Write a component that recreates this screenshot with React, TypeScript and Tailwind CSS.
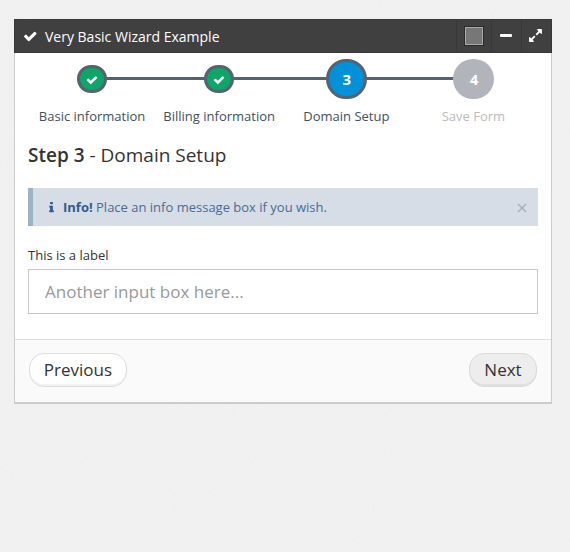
import React from "react";

const CHECK =
  "M1671 566q0 40-28 68l-724 724-136 136q-28 28-68 28t-68-28l-136-136-362-362q-28-28-28-68t28-68l136-136q28-28 68-28t68 28l294 295 656-657q28-28 68-28t68 28l136 136q28 28 28 68z";
const INFO =
  "M1216 1344v128q0 26-19 45t-45 19h-512q-26 0-45-19t-19-45v-128q0-26 19-45t45-19h64v-384h-64q-26 0-45-19t-19-45v-128q0-26 19-45t45-19h384q26 0 45 19t19 45v576h64q26 0 45 19t19 45zm-128-1152v192q0 26-19 45t-45 19h-256q-26 0-45-19t-19-45v-192q0-26 19-45t45-19h256q26 0 45 19t19 45z";
const EXPAND =
  "M883 1056q0 13-10 23l-332 332 144 144q19 19 19 45t-19 45-45 19h-448q-26 0-45-19t-19-45v-448q0-26 19-45t45-19 45 19l144 144 332-332q10-10 23-10t23 10l114 114q10 10 10 23zm781-864v448q0 26-19 45t-45 19-45-19l-144-144-332 332q-10 10-23 10t-23-10l-114-114q-10-10-10-23t10-23l332-332-144-144q-19-19-19-45t19-45 45-19h448q26 0 45 19t19 45z";

function Icon({ path, className }: { path: string; className: string }) {
  return (
    <svg viewBox="0 0 1792 1792" fill="currentColor" className={className} aria-hidden="true">
      <path d={path} />
    </svg>
  );
}

type StepState = "complete" | "active" | "pending";

const steps: { n: number; title: string; state: StepState }[] = [
  { n: 1, title: "Basic information", state: "complete" },
  { n: 2, title: "Billing information", state: "complete" },
  { n: 3, title: "Domain Setup", state: "active" },
  { n: 4, title: "Save Form", state: "pending" },
];

function Bullet({ n, state }: { n: number; state: StepState }) {
  if (state === "complete") {
    return (
      <span className="relative flex h-7 w-[30px] items-center justify-center rounded-full border-[3px] border-[#556270] bg-[#0da668] text-white">
        <Icon path={CHECK} className="mt-px size-[12px]" />
      </span>
    );
  }
  if (state === "active") {
    return (
      <span className="relative flex h-10 w-[41px] items-center justify-center rounded-full border-[3px] border-[#556270] bg-[#0091d9] pl-px text-[15px] font-bold text-white">
        {n}
      </span>
    );
  }
  return (
    <span className="relative flex h-10 w-[41px] items-center justify-center rounded-full bg-[#b1b5bb] pl-px text-[15px] font-bold text-white">
      {n}
    </span>
  );
}

function Steps() {
  return (
    <ol className="relative flex h-[91px] pt-[6px] pr-[1px] pl-[0.5px]">
      <li aria-hidden="true" className="absolute top-[24px] left-[64px] h-[3px] w-[382px] bg-[#556270]" />
      {steps.map((s) => (
        <li key={s.n} className="flex flex-1 flex-col items-center">
          <div className="flex h-10 items-center">
            <Bullet n={s.n} state={s.state} />
          </div>
          <span
            className={
              s.state === "pending"
                ? "mt-2 text-[13px] leading-[19px] whitespace-nowrap text-[#bbbbbb]"
                : "mt-2 text-[13px] leading-[19px] whitespace-nowrap text-[#40505f]"
            }
          >
            {s.title}
          </span>
        </li>
      ))}
    </ol>
  );
}

export default function App() {
  return (
    <div className="relative h-[552px] w-[570px] overflow-hidden bg-[#f2f2f2] pt-[19px] pl-[14px] font-['Open_Sans',sans-serif] text-[13px] text-[#333333]">
      <svg className="absolute inset-0 h-full w-full opacity-[0.05]" aria-hidden="true">
        <filter id="paper">
          <feTurbulence type="fractalNoise" baseFrequency="0.6" numOctaves="2" />
          <feColorMatrix type="saturate" values="0" />
        </filter>
        <rect width="100%" height="100%" filter="url(#paper)" />
      </svg>
      <section className="relative w-[538px]">
        <header className="flex h-[34px] items-stretch border border-[#383838] bg-[#404040] text-white">
          <Icon path={CHECK} className="mt-[9px] ml-[7.5px] size-[14.5px]" />
          <h2 className="ml-[8px] flex-1 text-[14px] leading-[34px]">Very Basic Wizard Example</h2>
          <div className="flex w-[35px] items-center justify-center border-l border-[#383838]">
            <span className="size-[20px] border border-[#2a2a2a] bg-[#777777] shadow-[inset_0_0_0_1px_#aaaaaa]" />
          </div>
          <div className="flex w-[30px] justify-center border-l border-[#383838] pt-[14px]">
            <span className="mr-[2px] h-[3px] w-[12px] rounded-[1px] bg-white" />
          </div>
          <div className="flex w-[30px] items-center justify-center border-l border-[#383838]">
            <Icon path={EXPAND} className="mr-[2px] mb-px size-[15px]" />
          </div>
        </header>
        <div className="h-[351px] border-x border-b-2 border-x-[#cccccc] border-b-[#cbcbcb] bg-white">
          <div className="h-[286px] px-[13px]">
            <Steps />
            <h3 className="text-[19px] leading-[22px]">
              <strong className="font-semibold">Step 3</strong> - Domain Setup
            </h3>
            <div className="mt-[22px] flex h-[38px] items-center border-l-[5px] border-[#9cb4c5] bg-[#d6dde7] text-[#305d8c]">
              <Icon path={INFO} className="ml-[12px] size-[13px]" />
              <p className="ml-[5px] flex-1 pt-[2px] text-[#4c6b90]">
                <strong className="font-bold text-[#305d8c]">Info!</strong> Place an info message box if you wish.
              </p>
              <button className="mr-[11px] pt-px" aria-label="Close">
                <svg viewBox="0 0 10 10" className="size-[10px]" fill="none" stroke="#a9b0ba" strokeWidth="1.5">
                  <path d="M1 1l8 8M9 1l-8 8" />
                </svg>
              </button>
            </div>
            <label htmlFor="domain" className="mt-[20px] block leading-[19px]">
              This is a label
            </label>
            <input
              id="domain"
              placeholder="Another input box here..."
              className="mt-[4px] block h-[45px] w-full border border-[#c7c7c7] bg-white px-[16px] text-[17px] placeholder:text-[#999999]"
            />
          </div>
          <footer className="flex h-[63px] justify-between border-t border-[#dfdfdf] bg-[#fafafa] px-[14px] pt-[13px]">
            <button className="h-[34px] w-[98px] rounded-[15px] border border-[#dddddd] bg-white text-[17px] leading-[32px] shadow-[inset_0_-2px_0_rgba(0,0,0,0.05)]">
              Previous
            </button>
            <button className="h-[34px] w-[68px] rounded-[15px] border border-[#dbdbdb] bg-[#ededed] text-[17px] leading-[32px] shadow-[inset_0_-2px_0_rgba(0,0,0,0.05)]">
              Next
            </button>
          </footer>
        </div>
      </section>
    </div>
  );
}
